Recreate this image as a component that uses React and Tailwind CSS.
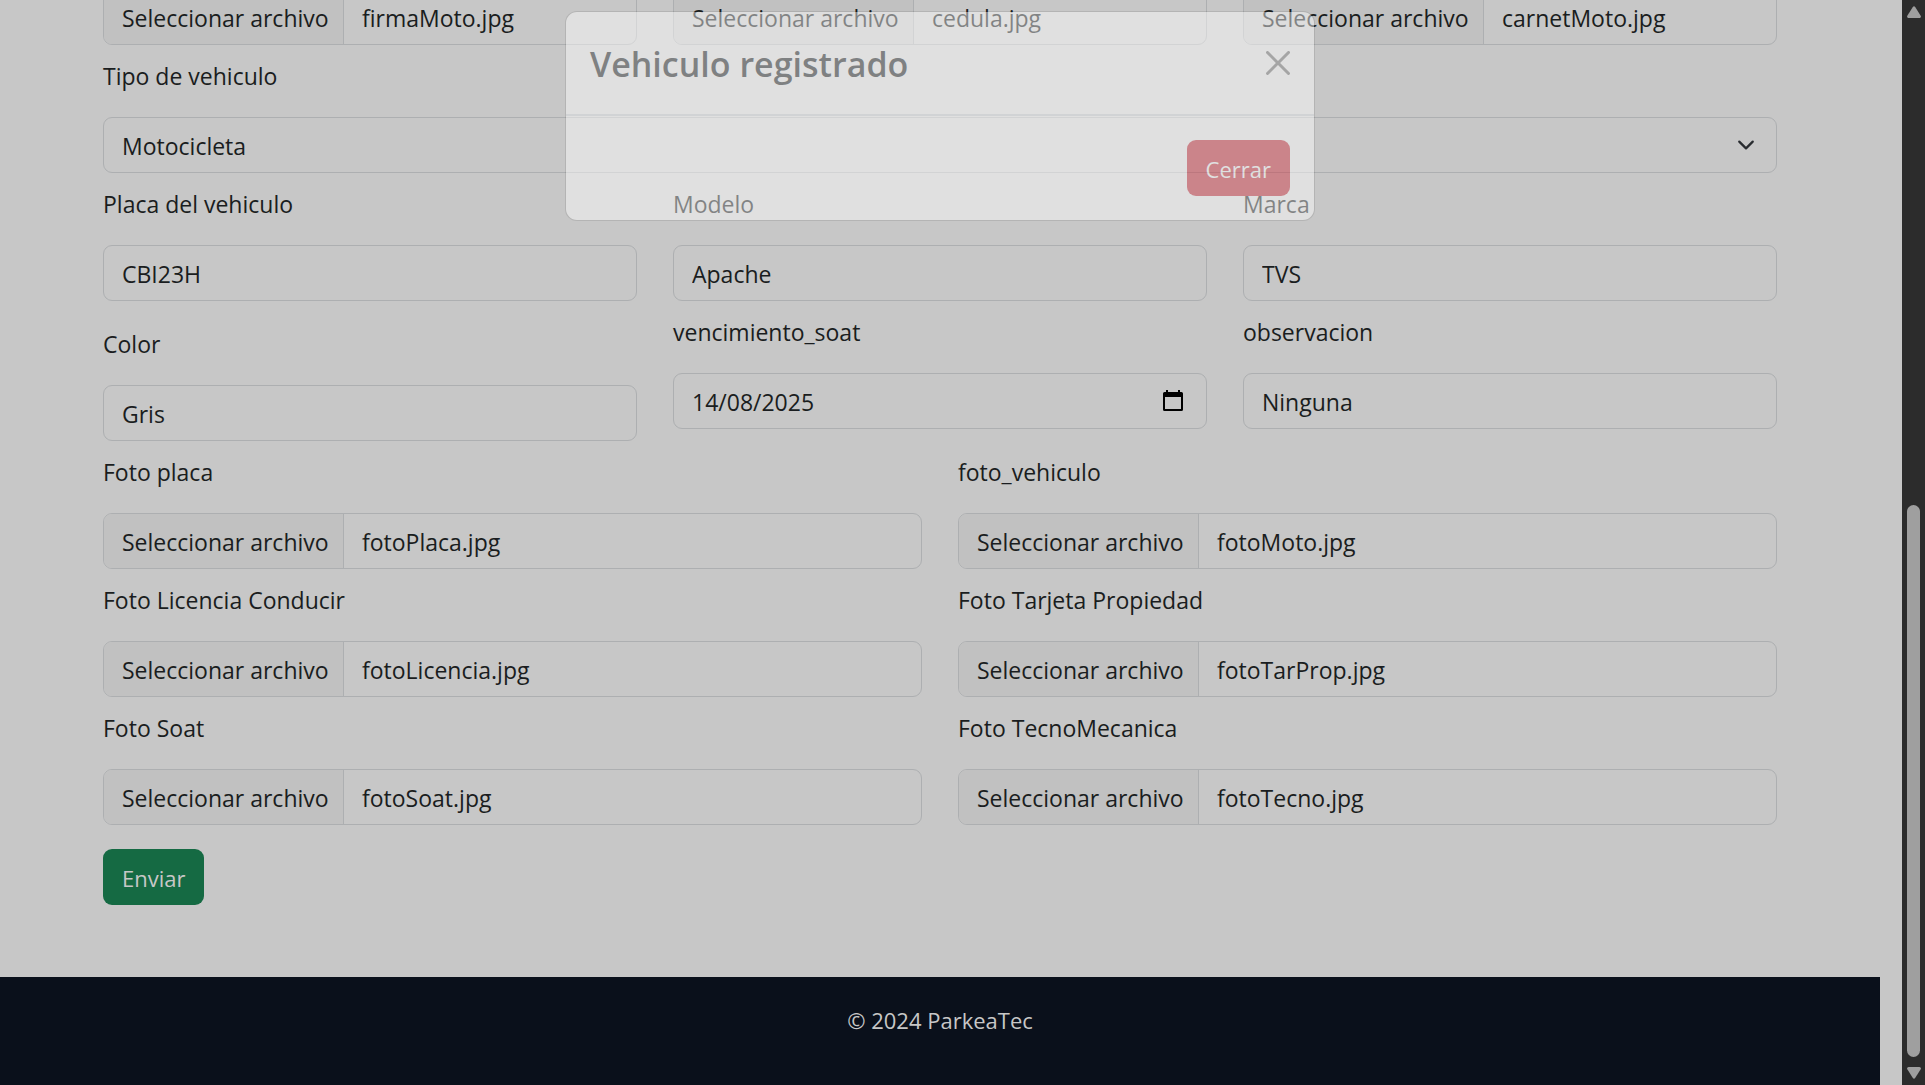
import React, { useId } from "react";

const controlBorder = "rounded-[9px] border border-[#adafb1]";
const labelClass = "block pt-[13px] pb-[23px] leading-9";

function TextField({ label, value, className }) {
  const id = useId();
  return (
    <div className={className}>
      <label htmlFor={id} className={labelClass}>{label}</label>
      <input
        id={id}
        type="text"
        defaultValue={value}
        className={`block h-14 w-full bg-transparent px-[18px] pt-0.5 outline-none ${controlBorder}`}
      />
    </div>
  );
}

function DateField({ label, value }) {
  const id = useId();
  return (
    <div>
      <label htmlFor={id} className={labelClass}>{label}</label>
      <div className={`flex h-14 items-center px-[18px] ${controlBorder}`}>
        <input
          id={id}
          type="text"
          inputMode="numeric"
          defaultValue={value}
          className="min-w-0 flex-1 bg-transparent pt-0.5 outline-none"
        />
        <button type="button" aria-label="Abrir calendario" className="mr-1">
          <svg width="22" height="22" viewBox="0 0 22 22" className="block text-black">
            <path
              fill="currentColor"
              fillRule="evenodd"
              d="M4 0h2v2h10V0h2v2h1.500a1.500 1.500 0 0 1 1.500 1.500v16a1.500 1.500 0 0 1-1.500 1.500h-17A1.500 1.500 0 0 1 1 19.500v-16A1.500 1.500 0 0 1 2.500 2H4zM3 7v12h16V7z"
            />
          </svg>
        </button>
      </div>
    </div>
  );
}

function FileField({ label, file }) {
  const id = useId();
  return (
    <div>
      {label && <label htmlFor={id} className={labelClass}>{label}</label>}
      <label
        htmlFor={id}
        className={`flex h-14 cursor-pointer items-center overflow-hidden ${controlBorder}`}
      >
        <input id={id} type="file" className="sr-only" aria-label={label || file} />
        <span className="flex h-full w-60 shrink-0 items-center border-r border-[#adafb1] bg-[#c1c1c1] pt-0.5 pl-[18px] whitespace-nowrap">
          Seleccionar archivo
        </span>
        <span className="px-[18px] pt-0.5">{file}</span>
      </label>
    </div>
  );
}

function VehicleType() {
  return (
    <div>
      <label htmlFor="tipo" className={labelClass}>Tipo de vehiculo</label>
      <div className="relative">
        <select
          id="tipo"
          defaultValue="Motocicleta"
          className={`block h-14 w-full appearance-none bg-transparent px-[18px] pt-0.5 outline-none ${controlBorder}`}
        >
          <option>Motocicleta</option>
          <option>Carro</option>
        </select>
        <svg
          width="18"
          height="18"
          viewBox="0 0 16 16"
          className="pointer-events-none absolute top-[19px] right-[22px]"
          fill="none"
          stroke="#292c30"
          strokeWidth="2"
          strokeLinecap="round"
          strokeLinejoin="round"
        >
          <path d="m2 5 6 6 6-6" />
        </svg>
      </div>
    </div>
  );
}

function Modal() {
  return (
    <div className="absolute inset-x-0 top-[11px] flex justify-center">
      <div
        role="dialog"
        aria-labelledby="modal-title"
        className="w-full max-w-[750px] rounded-[12px] border border-black/20 bg-white bg-clip-padding opacity-45"
      >
        <header className="flex items-start justify-between border-b-2 border-[#dee2e6] px-6 pt-[29px] pb-[27px]">
          <h5 id="modal-title" className="text-[34px] leading-[46px] font-semibold text-[#292d30]">
            Vehiculo registrado
          </h5>
          <button type="button" aria-label="Cerrar ventana" className="mt-[10px] opacity-50">
            <svg width="24" height="24" viewBox="0 0 16 16" className="block" fill="#000">
              <path d="M.293.293a1 1 0 0 1 1.414 0L8 6.586 14.293.293a1 1 0 1 1 1.414 1.414L9.414 8l6.293 6.293a1 1 0 0 1-1.414 1.414L8 9.414l-6.293 6.293a1 1 0 0 1-1.414-1.414L6.586 8 .293 1.707a1 1 0 0 1 0-1.414z" />
            </svg>
          </button>
        </header>
        <footer className="flex justify-end p-6">
          <button type="button" className="h-14 rounded-[9px] bg-[#d03442] px-[19px] pt-0.5 text-[22px] text-white">
            Cerrar
          </button>
        </footer>
      </div>
    </div>
  );
}

function ScrollRail() {
  return (
    <div aria-hidden="true" className="flex w-[23px] shrink-0 flex-col items-center bg-[#2c2c2c] py-[6px]">
      <svg width="16" height="12" viewBox="0 0 16 12" fill="#9f9f9f">
        <path d="M6.700 1.200a1.600 1.600 0 0 1 2.600 0l5.400 8.500c.6 1-.1 2.300-1.300 2.300H2.600c-1.200 0-1.900-1.300-1.300-2.300z" />
      </svg>
      <div className="grow-[487]" />
      <div className="w-[13px] grow-[553] rounded-full bg-[#9f9f9f]" />
      <div className="h-[10px]" />
      <svg width="16" height="12" viewBox="0 0 16 12" fill="#9f9f9f">
        <path d="M6.700 10.800a1.600 1.600 0 0 0 2.600 0l5.400-8.500c.6-1-.1-2.300-1.300-2.300H2.600c-1.200 0-1.900 1.300-1.300 2.300z" />
      </svg>
    </div>
  );
}

export default function App() {
  return (
    <div className="flex h-screen overflow-hidden bg-[#c7c7c7] font-['Open_Sans','Noto_Sans',sans-serif] text-[23px] text-[#1a1d20]">
      <div className="relative flex min-w-0 flex-1 flex-col">
        <main className="px-[103px] pb-[72px]">
          <form className="-mt-[11px]" onSubmit={(e) => e.preventDefault()}>
            <div className="grid grid-cols-3 gap-x-9">
              <FileField file="firmaMoto.jpg" />
              <FileField file="cedula.jpg" />
              <FileField file="carnetMoto.jpg" />
            </div>
            <VehicleType />
            <div className="grid grid-cols-3 gap-x-9">
              <TextField label="Placa del vehiculo" value="CBI23H" />
              <TextField label="Modelo" value="Apache" />
              <TextField label="Marca" value="TVS" />
              <TextField label="Color" value="Gris" className="pt-3" />
              <DateField label="vencimiento_soat" value="14/08/2025" />
              <TextField label="observacion" value="Ninguna" />
            </div>
            <div className="grid grid-cols-2 gap-x-9">
              <FileField label="Foto placa" file="fotoPlaca.jpg" />
              <FileField label="foto_vehiculo" file="fotoMoto.jpg" />
              <FileField label="Foto Licencia Conducir" file="fotoLicencia.jpg" />
              <FileField label="Foto Tarjeta Propiedad" file="fotoTarProp.jpg" />
              <FileField label="Foto Soat" file="fotoSoat.jpg" />
              <FileField label="Foto TecnoMecanica" file="fotoTecno.jpg" />
            </div>
            <button type="submit" className="mt-6 block h-14 rounded-[9px] bg-[#156a43] px-[19px] pt-0.5 text-[22px] text-[#c7c7c7]">
              Enviar
            </button>
          </form>
        </main>
        <footer className="flex-1 bg-[#0a101b] pt-[25px] text-center text-[22px] leading-9 text-[#c7c7c7]">
          © 2024 ParkeaTec
        </footer>
        <Modal />
      </div>
      <div className="w-[22px] shrink-0" />
      <ScrollRail />
    </div>
  );
}
